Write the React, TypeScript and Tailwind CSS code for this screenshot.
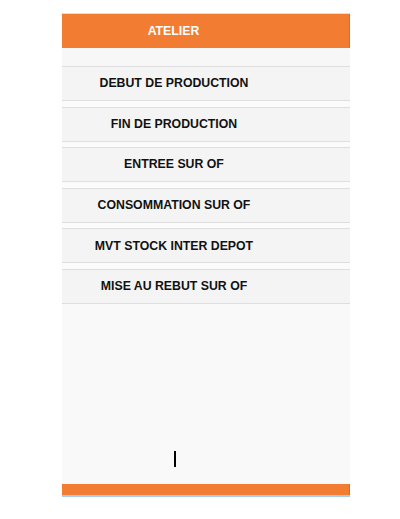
const items = [
  "DEBUT DE PRODUCTION",
  "FIN DE PRODUCTION",
  "ENTREE SUR OF",
  "CONSOMMATION SUR OF",
  "MVT STOCK INTER DEPOT",
  "MISE AU REBUT SUR OF",
];

export default function App() {
  return (
    <div className="h-[519px] w-[400px] bg-white pl-[62px] pt-[13px] font-['Liberation_Sans',Arial,sans-serif]">
      <div className="flex h-[471px] w-[288px] flex-col border-t border-[#cfe2e8] bg-[#f9f9f9]">
        <div className="flex h-[34px] shrink-0 items-center justify-center border-r border-[#e8661c] bg-[#f27d32] pr-[64px] text-[12.3px] font-bold text-white">
          ATELIER
        </div>
        <div className="h-[18px] shrink-0 bg-[#f7f7f7]" />
        <div className="flex shrink-0 flex-col gap-[5.6px] bg-[#fbfbfb]">
          {items.map((label) => (
            <div
              key={label}
              className="flex h-[35px] items-center justify-center border-y border-[#dedede] bg-[#f4f4f4] pr-[64px] text-[12.3px] font-bold text-[#111]"
            >
              {label}
            </div>
          ))}
        </div>
        <div className="relative flex-1">
          <div className="absolute left-[112px] top-[147px] h-[16px] w-[2px] bg-black" />
        </div>
      </div>
      <div className="h-[11px] w-[288px] border-r border-[#e8661c] bg-[#f27d32]" />
      <div className="h-[2px] w-[288px] bg-[#a9cfe6]" />
    </div>
  );
}
